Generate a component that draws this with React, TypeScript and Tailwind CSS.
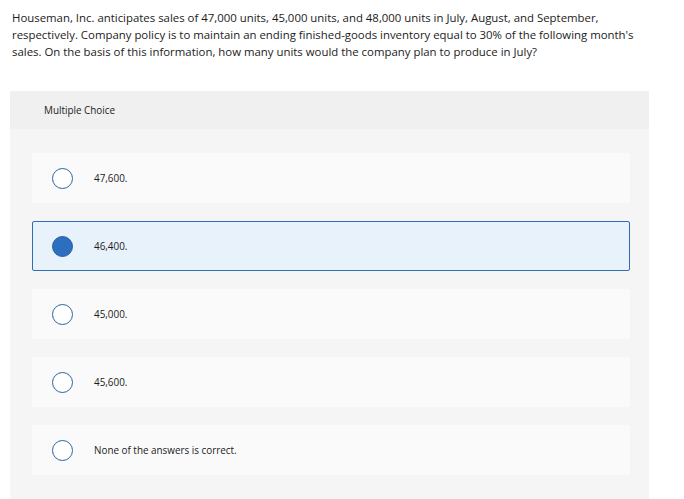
import React, { useState } from "react";

const options = ["47,600.", "46,400.", "45,000.", "45,600.", "None of the answers is correct."];

const App = () => {
  const [selected, setSelected] = useState(1);

  return (
    <div className="min-h-screen w-[684px] bg-white font-['Open_Sans',sans-serif] text-[#1b1b1b]">
      <p className="pl-3 pt-[9px] text-[11.4px] leading-[17px]">
        Houseman, Inc. anticipates sales of 47,000 units, 45,000 units, and 48,000 units in July, August, and September,
        <br />
        respectively. Company policy is to maintain an ending finished-goods inventory equal to 30% of the following month's
        <br />
        sales. On the basis of this information, how many units would the company plan to produce in July?
      </p>

      <div className="ml-[10px] mt-[31px] w-[639px] bg-[#f5f5f5] pb-6">
        <div className="flex h-[38px] items-center bg-[#f0f0f0] pl-[34px] text-[9.9px]">Multiple Choice</div>
        <div className="flex flex-col gap-[18px] pl-[22px] pr-[19px] pt-6">
          {options.map((opt, i) => {
            const active = i === selected;
            return (
              <button
                key={opt}
                onClick={() => setSelected(i)}
                className={
                  active
                    ? "flex h-[50px] items-center rounded-[2px] border border-[#2e6db7] bg-[#e8f2fb] pl-[19px] text-left"
                    : "flex h-[50px] items-center rounded-[2px] border border-transparent bg-[#fafafa] pl-[19px] text-left"
                }
              >
                <span
                  className={
                    active
                      ? "h-[21px] w-[21px] rounded-full border border-[#25609f] bg-[#2c6ebf]"
                      : "h-[21px] w-[21px] rounded-full border-[1.5px] border-[#2b63a0] bg-white"
                  }
                />
                <span className="ml-[21px] text-[9.9px]">{opt}</span>
              </button>
            );
          })}
        </div>
      </div>
    </div>
  );
};

export default App;
